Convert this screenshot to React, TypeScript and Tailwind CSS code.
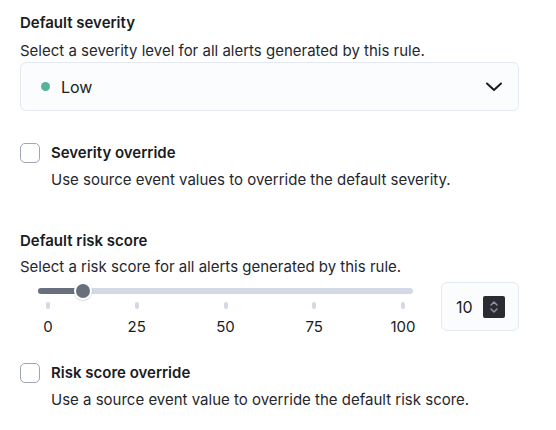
import React from 'react';

// tick values under the risk score slider
const TICKS = [0, 25, 50, 75, 100];

function Checkbox() {
  return <div className="w-5 h-5 shrink-0 rounded-[5px] border border-[#9ea6b3] bg-white" />;
}

function OverrideRow({ title, desc }: { title: string; desc: string }) {
  return (
    <div>
      <div className="flex items-center gap-[11px]">
        <Checkbox />
        <span className="text-[15px] leading-5 font-semibold text-[#1a1c21]">{title}</span>
      </div>
      <p className="mt-[7px] pl-[31px] text-[15px] leading-5 text-[#25272e]">{desc}</p>
    </div>
  );
}

function SeveritySelect() {
  return (
    <div className="mt-px h-[49px] flex items-center justify-between rounded-[6px] border border-[#e3e8f2] bg-[#fbfcfd] pl-[20px] pr-[16px]">
      <div className="flex items-center gap-[11px]">
        <span className="w-[9px] h-[9px] rounded-full bg-[#54b399]" />
        <span className="text-base text-[#1a1c21]">Low</span>
      </div>
      <svg width="16" height="10" viewBox="0 0 16 10" fill="none">
        <polyline points="1,1.5 8,8 15,1.5" stroke="#1a1c21" strokeWidth="2" strokeLinecap="round" strokeLinejoin="round" />
      </svg>
    </div>
  );
}

function RiskSlider({ value }: { value: number }) {
  // thumb centre runs from 8px to width-8px on the 375px track
  const pct = value / 100;
  const thumbX = 8 + pct * (375 - 16);
  return (
    <div className="mt-[5px] flex items-start">
      <div className="pl-[18px] pr-[28px]">
        <div className="relative w-[375px] mt-[6px] h-[6px] rounded-full bg-[#d3dae6]">
          <div className="absolute left-0 top-0 h-[6px] rounded-full bg-[#69707d]" style={{ width: thumbX }} />
          <div
            className="absolute top-1/2 w-[18px] h-[18px] rounded-full bg-[#69707d] border-2 border-white shadow-[0_1px_2px_rgba(0,0,0,0.15)]"
            style={{ left: thumbX - 8, transform: 'translateY(-50%)' }}
          />
        </div>
        <div className="flex justify-between w-[375px]">
          {TICKS.map((t) => (
            <div key={t} className="w-[20px] flex flex-col items-center">
              <div className="mt-[8px] w-[4px] h-[7px] rounded-full bg-[#d3dae6]" />
              <span className="mt-[8px] text-[15px] leading-5 text-[#1a1c21]">{t}</span>
            </div>
          ))}
        </div>
      </div>
      <div className="w-[79px] h-[49px] flex items-center justify-between rounded-[6px] border border-[#e3e8f2] bg-[#fbfcfd] pl-[14px] pr-[13px]">
        <span className="text-base text-[#1a1c21]">{value}</span>
        <div className="w-[22px] h-[22px] rounded-[2px] bg-[#2a2b33] flex items-center justify-center">
          <svg width="10" height="16" viewBox="0 0 10 16" fill="none">
            <polyline points="2,6 5,3 8,6" stroke="#8e929c" strokeWidth="1.5" strokeLinecap="round" strokeLinejoin="round" />
            <polyline points="2,10 5,13 8,10" stroke="#8e929c" strokeWidth="1.5" strokeLinecap="round" strokeLinejoin="round" />
          </svg>
        </div>
      </div>
    </div>
  );
}

export default function App() {
  return (
    <div className="w-[556px] h-[430px] bg-white px-5 pt-[13px] font-['Inter',sans-serif]">
      <div className="w-[499px]">
        <h3 className="text-[15px] leading-5 font-semibold text-[#1a1c21]">Default severity</h3>
        <p className="mt-2 text-[15px] leading-5 text-[#25272e]">Select a severity level for all alerts generated by this rule.</p>
        <SeveritySelect />

        <div className="mt-[32px]">
          <OverrideRow title="Severity override" desc="Use source event values to override the default severity." />
        </div>

        <h3 className="mt-[41px] text-[15px] leading-5 font-semibold text-[#1a1c21]">Default risk score</h3>
        <p className="mt-[6px] text-[15px] leading-5 text-[#25272e]">Select a risk score for all alerts generated by this rule.</p>
        <RiskSlider value={10} />

        <div className="mt-[26px]">
          <OverrideRow title="Risk score override" desc="Use a source event value to override the default risk score." />
        </div>
      </div>
    </div>
  );
}
